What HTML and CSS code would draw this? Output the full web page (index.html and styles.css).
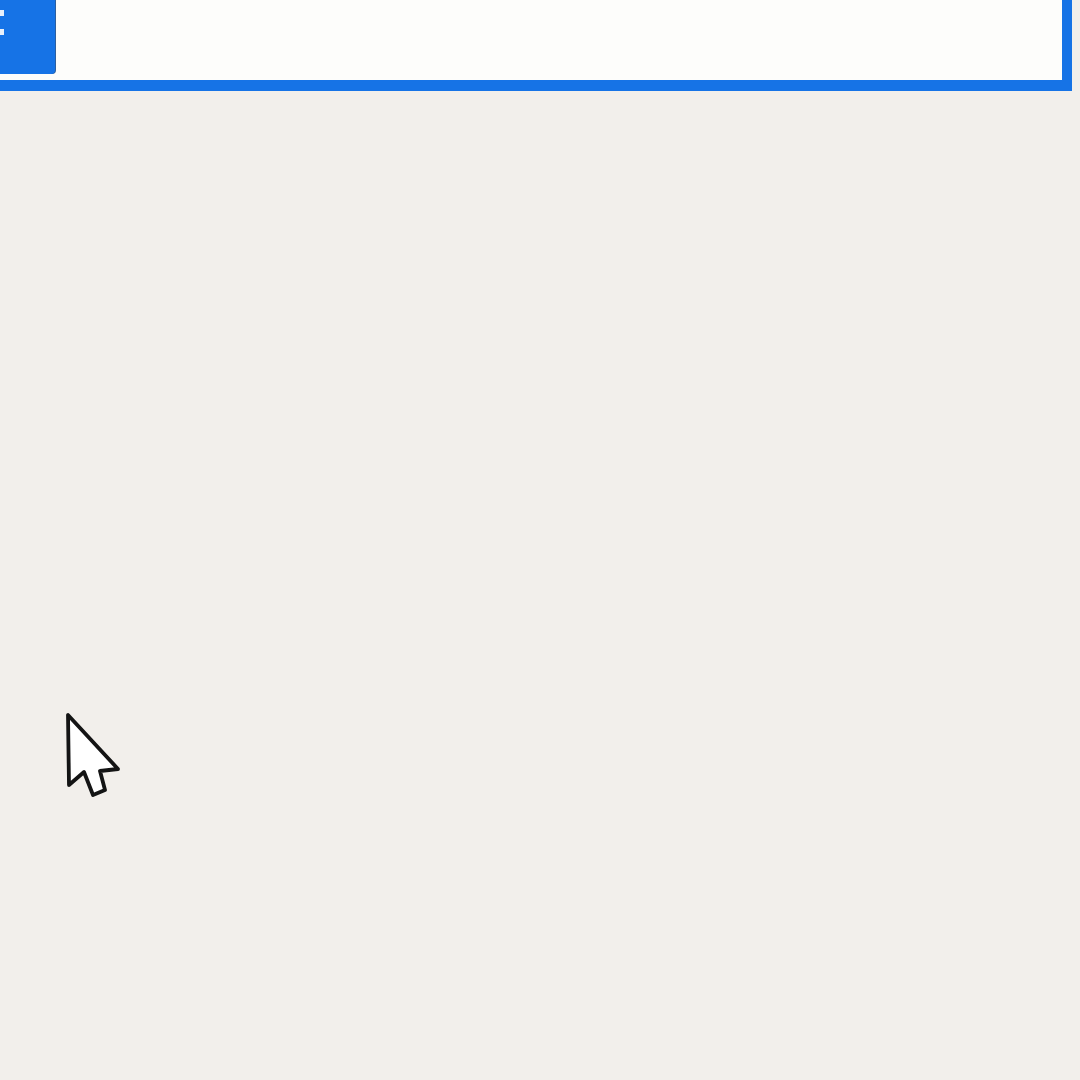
FILE: index.html
```html
<!DOCTYPE html>
<html lang="en">
<head>
<meta charset="utf-8">
<title>Canvas</title>
<link rel="stylesheet" href="styles.css">
</head>
<body>
<header class="bar">
  <div class="menu-btn">
    <span class="tick"></span>
    <span class="tick"></span>
  </div>
  <div class="field"></div>
</header>
<main class="canvas">
  <svg class="cursor" width="70" height="100" viewBox="60 708 70 100" aria-hidden="true">
    <polygon points="68,715 69,785 84,772 93,795 105,790 100,771 118,769" fill="#ffffff" stroke="#141414" stroke-width="3.8" stroke-linejoin="round"/>
  </svg>
</main>
</body>
</html>
```
FILE: styles.css
```css
html, body {
  margin: 0;
  padding: 0;
}
body {
  width: 1080px;
  height: 1080px;
  background: #f2efeb;
  font-family: "Liberation Sans", Arial, sans-serif;
  overflow: hidden;
  position: relative;
}
.bar {
  display: flex;
  align-items: flex-start;
  width: 1062px;
  height: 80px;
  background: #fdfdfb;
  border-right: 10px solid #1673e6;
  border-bottom: 11px solid #1673e6;
}
.menu-btn {
  width: 55px;
  height: 74px;
  background: #1673e6;
  border-bottom-right-radius: 4px;
  box-shadow: 1px 0 0 #2d5f9e;
  display: flex;
  flex-direction: column;
  gap: 13px;
  padding-top: 10px;
  box-sizing: border-box;
}
.tick {
  display: block;
  width: 4px;
  height: 6px;
  background: #e8f0fb;
}
.field {
  flex: 1;
  height: 100%;
}
.canvas {
  height: 989px;
}
.cursor {
  position: absolute;
  left: 60px;
  top: 708px;
}
```
